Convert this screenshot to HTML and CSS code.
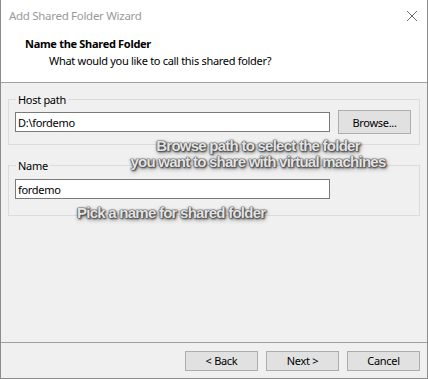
FILE: index.html
```html
<!DOCTYPE html>
<html lang="en">
<head>
    <meta charset="UTF-8">
    <title>Add Shared Folder Wizard</title>
    <link rel="stylesheet" href="styles.css">
</head>
<body>
    <div class="window">
        <div class="titlebar">
            <span class="title">Add Shared Folder Wizard</span>
            <svg class="close" width="12" height="12" viewBox="0 0 12 12">
                <path d="M1 1 L11 11 M11 1 L1 11" stroke="#6f6f6f" stroke-width="1"/>
            </svg>
        </div>
        <div class="header">
            <div class="heading">Name the Shared Folder</div>
            <div class="subheading">What would you like to call this shared folder?</div>
        </div>
        <div class="content">
            <fieldset class="group">
                <legend>Host path</legend>
                <div class="row">
                    <input class="field" type="text" value="D:\fordemo">
                    <button class="btn btn-browse">Browse...</button>
                </div>
            </fieldset>
            <fieldset class="group group-name">
                <legend>Name</legend>
                <input class="field" type="text" value="fordemo">
            </fieldset>

            <!-- annotations drawn over the dialog -->
            <div class="hint hint-browse">Browse path to select the folder<br>you want to share with virtual machines</div>
            <div class="hint hint-name">Pick a name for shared folder</div>
        </div>
        <div class="footer">
            <button class="btn">&lt; Back</button>
            <button class="btn">Next &gt;</button>
            <button class="btn">Cancel</button>
        </div>
    </div>
</body>
</html>
```

FILE: styles.css
```css
* {
    box-sizing: border-box;
}
body {
    margin: 0;
    font-family: "Noto Sans", "Open Sans", Arial, sans-serif;
    font-size: 11px;
    letter-spacing: -0.3px;
    color: #000;
    background: #f0f0f0;
}
.window {
    width: 428px;
    height: 379px;
    border: 1px solid #8c8c8c;
    border-top: none;
    display: flex;
    flex-direction: column;
    background: #f0f0f0;
}
.titlebar {
    height: 31px;
    background: #fff;
    display: flex;
    align-items: center;
    justify-content: space-between;
    padding: 0 9px 0 8px;
}
.title {
    color: #9a9a9a;
    font-size: 11.5px;
}
.header {
    height: 52px;
    background: #fff;
    border-bottom: 1px solid #a0a0a0;
    padding: 5px 0 0 24px;
}
.heading {
    font-weight: bold;
    line-height: 16px;
}
.subheading {
    padding-left: 24px;
    line-height: 18px;
}
.content {
    position: relative;
    flex: 1;
    padding: 9px 7px 0 7px;
}
.group {
    margin: 0;
    padding: 3px 8px 10px 6px;
    border: 1px solid #dcdcdc;
    min-width: 0;
}
.group legend {
    padding: 0 2px;
    margin-left: 1px;
    line-height: 15px;
}
.group-name {
    margin-top: 13px;
    padding-top: 6px;
    padding-bottom: 16px;
}
.row {
    display: flex;
    align-items: center;
    gap: 8px;
}
.field {
    width: 315px;
    height: 20px;
    border: 1px solid #7a7a7a;
    background: #fff;
    padding: 0 2px;
    font-family: inherit;
    font-size: 11px;
    letter-spacing: -0.3px;
    color: #000;
    outline: none;
}
.btn {
    width: 73px;
    height: 20px;
    background: #e1e1e1;
    border: 1px solid #adadad;
    font-family: inherit;
    font-size: 11px;
    letter-spacing: -0.3px;
    color: #000;
    padding: 0;
}
.btn-browse {
    height: 24px;
}
.hint {
    position: absolute;
    white-space: nowrap;
    font-family: "Liberation Sans", Arial, sans-serif;
    font-weight: bold;
    font-size: 15px;
    letter-spacing: -0.75px;
    line-height: 16px;
    color: #e4e4e4;
    text-align: center;
    text-shadow: 0 0 1px #444, 0 0 1px #444, 0 0 2px #555, 1px 1px 2px #333, 1px 2px 4px rgba(0,0,0,0.5);
}
.hint-browse {
    left: 128px;
    top: 55px;
    width: 258px;
}
.hint-name {
    left: 76px;
    top: 122px;
}
.footer {
    height: 36px;
    border-top: 1px solid #a0a0a0;
    display: flex;
    justify-content: flex-end;
    align-items: center;
    gap: 8px;
    padding: 0 7px 0 0;
}
```
